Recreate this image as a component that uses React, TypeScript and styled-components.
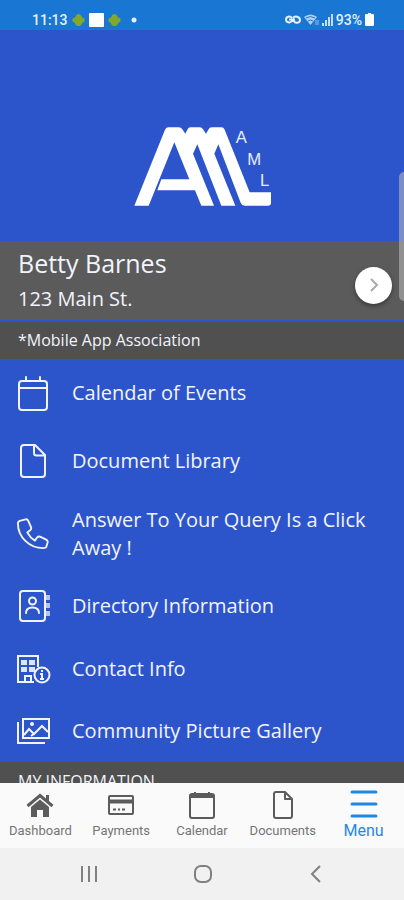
import React from "react";
import styled, { createGlobalStyle } from "styled-components";

const Global = createGlobalStyle`
  *, *::before, *::after { box-sizing: border-box; }
  body { margin: 0; background: #2d55cb; }
  button { border: 0; margin: 0; padding: 0; background: none; font: inherit; color: inherit; cursor: pointer; }
  a { color: inherit; text-decoration: none; }
  h1, h2, p, ul { margin: 0; padding: 0; font-weight: 400; }
  svg { display: block; flex: none; }
`;

const Screen = styled.div`
  position: relative;
  display: flex;
  flex-direction: column;
  height: 100vh;
  background: #2d55cb;
  color: #f2f4fc;
  font-family: "Open Sans", "Noto Sans", sans-serif;
`;

const StatusBar = styled.header`
  flex: none;
  display: flex;
  justify-content: space-between;
  align-items: center;
  height: 30px;
  padding: 9px 30px 0 32px;
  background: #1976d2;
  color: #e4f0fc;
  font: 500 14px/20px Roboto, sans-serif;
`;

const StatusGroup = styled.div<{ $gap: number }>`
  display: flex;
  align-items: center;
  gap: ${(p) => p.$gap}px;
`;

const Content = styled.main`
  flex: 1;
  min-height: 0;
  overflow: hidden;
`;

const LogoArea = styled.div`
  display: flex;
  justify-content: center;
  padding: 85px 0 21px 6px;
`;

const Profile = styled.section`
  display: flex;
  justify-content: space-between;
  align-items: center;
  padding: 3px 12px 4px 18px;
  background: #5b5b5b;
`;

const Name = styled.h1`
  font-size: 25px;
  line-height: 38px;
`;

const Address = styled.p`
  font-size: 20px;
  line-height: 34px;
`;

const RoundButton = styled.button`
  display: grid;
  place-items: center;
  width: 37px;
  height: 37px;
  margin-top: 10px;
  border-radius: 50%;
  background: #fff;
  box-shadow: 0 2px 4px rgba(0, 0, 0, 0.4);
`;

const Association = styled.h2`
  height: 37px;
  margin-top: 2px;
  padding-left: 18px;
  background: #505050;
  font-size: 16px;
  line-height: 37px;
`;

const MenuList = styled.ul`
  list-style: none;
`;

const MenuLink = styled.a<{ $height: number }>`
  display: grid;
  grid-template-columns: 32px 1fr;
  align-items: center;
  gap: 23px;
  min-height: ${(p) => p.$height}px;
  padding: 0 24px 0 17px;
  font-size: 20px;
  line-height: 28px;
`;

const SectionTitle = styled.h2`
  padding-left: 18px;
  background: #505050;
  font-size: 16px;
  line-height: 38px;
`;

const TabBar = styled.nav`
  flex: none;
  display: grid;
  grid-template-columns: repeat(5, 1fr);
  height: 65px;
  background: #fafafa;
`;

const Tab = styled.a<{ $active?: boolean }>`
  display: flex;
  flex-direction: column;
  align-items: center;
  padding-top: 6px;
  color: ${(p) => (p.$active ? "#1e88e5" : "#757575")};
  font-family: Roboto, sans-serif;
  font-size: ${(p) => (p.$active ? 16 : 13)}px;
  line-height: 20px;
`;

const TabIcon = styled.span`
  display: grid;
  place-items: center;
  height: 32px;
  color: #5c5c5c;
`;

const SystemBar = styled.nav`
  flex: none;
  display: flex;
  justify-content: space-between;
  align-items: center;
  height: 52px;
  padding: 0 78px;
  background: #f1f1f1;
  color: #808080;
`;

const EdgeHandle = styled.div`
  position: absolute;
  top: 172px;
  right: 0;
  width: 5px;
  height: 129px;
  border-radius: 5px 0 0 5px;
  background: rgba(190, 190, 190, 0.55);
`;

const Android = () => (
  <svg width="13" height="14" viewBox="0 0 13 14" fill="#82a829" aria-hidden="true">
    <path d="M3 4.500C3.500 2.500 5 1 6.500 1S9.500 2.500 10 4.500L12.500 5.500V8.500L10 10V11L8 13H5L3 11V10L.5 8.500V5.500Z" />
  </svg>
);

const Logo = () => (
  <svg width="170" height="105" viewBox="0 0 510 315" role="img" aria-label="AML">
    <path
      fill="#fff"
      d="M43 272 135 44Q138 37 146 37H176Q183 37 187 43L196 56 202 44Q205 37 212 37H239Q246 37 249 43L258 56 265 44Q268 37 276 37H304Q311 37 314 44L389 232H453V263Q453 272 444 272H374Q366 272 362 263L295 88 283 116 346 272H304L232 88 219 116 282 272H244L225 226H112L124 193H208L163 82 86 272Z"
    />
    <g fill="#e9edfb" fontFamily="Liberation Sans, Arial, sans-serif" fontSize="50">
      <text x="347" y="84">A</text>
      <text x="382" y="149">M</text>
      <text x="420" y="214">L</text>
    </g>
  </svg>
);

const line = { fill: "none", stroke: "currentColor", strokeWidth: 2, strokeLinecap: "round", strokeLinejoin: "round" } as const;

const icons = {
  calendar: (
    <svg width="32" height="36" viewBox="0 0 32 36" {...line} aria-hidden="true">
      <rect x="2" y="6" width="28" height="29" rx="3" />
      <path d="M2 13H30M9 2V6M23 2V6" />
    </svg>
  ),
  document: (
    <svg width="32" height="36" viewBox="0 0 32 36" {...line} aria-hidden="true">
      <path d="M7 2H18L28 12V31Q28 34 25 34H7Q4 34 4 31V5Q4 2 7 2ZM17 2V10Q17 12.500 19.500 12.500H28" />
    </svg>
  ),
  phone: (
    <svg width="32" height="32" viewBox="0 0 34 34" {...line} aria-hidden="true">
      <path d="M3 3 9 1.500Q11 1 12 3L15 10Q15.500 12 14 13L11 15.500Q14 21 19 24L21.500 20.500Q23 19 25 20L31 23Q33 24 32.500 26L31 31Q30.500 32 28 32C13 32 1 20 1 6Q1 3.500 3 3Z" />
    </svg>
  ),
  directory: (
    <svg width="34" height="34" viewBox="0 0 34 34" {...line} aria-hidden="true">
      <rect x="3" y="2" width="25" height="30" rx="3" />
      <circle cx="15.500" cy="12" r="3.500" />
      <path d="M9 24C9 20 11.500 18.500 15.500 18.500S22 20 22 24" />
      <path d="M31 6V11M31 14V19M31 22V27" strokeWidth="4" strokeLinecap="butt" opacity=".7" />
    </svg>
  ),
  contact: (
    <svg width="34" height="30" viewBox="0 0 34 30" {...line} strokeLinecap="butt" strokeLinejoin="miter" aria-hidden="true">
      <path d="M17 28H1V2H21V13M8 28V22H14V28" />
      <path d="M4 8.500H10M12 8.500H18M4 15.500H10M12 15.500H18" strokeWidth="5" opacity=".9" />
      <circle cx="25" cy="21" r="7.500" />
      <path d="M25 16V18M23 20H25V25M23 25H27" />
    </svg>
  ),
  gallery: (
    <svg width="34" height="28" viewBox="0 0 34 28" {...line} strokeLinecap="butt" strokeLinejoin="miter" aria-hidden="true">
      <path d="M1 5V26H28" />
      <rect x="6" y="2" width="26" height="19" />
      <path d="M7 18 12 12 17 17 25 9 31 15M14 19 18 16" />
      <circle cx="15" cy="7" r="1" />
    </svg>
  ),
};

const menu: { label: string; icon: keyof typeof icons; height: number }[] = [
  { label: "Calendar of Events", icon: "calendar", height: 68 },
  { label: "Document Library", icon: "document", height: 68 },
  { label: "Answer To Your Query Is a Click Away !", icon: "phone", height: 78 },
  { label: "Directory Information", icon: "directory", height: 65 },
  { label: "Contact Info", icon: "contact", height: 62 },
  { label: "Community Picture Gallery", icon: "gallery", height: 62 },
];

const tabs = [
  {
    label: "Dashboard",
    icon: (
      <svg width="28" height="26" viewBox="0 0 28 26" aria-hidden="true">
        <path d="M1.500 14 14 3.500 26.500 14M21.500 3V9" fill="none" stroke="currentColor" strokeWidth="3" />
        <path d="M5 15 14 7.500 23 15V25H17V18H11V25H5Z" fill="currentColor" />
      </svg>
    ),
  },
  {
    label: "Payments",
    icon: (
      <svg width="26" height="22" viewBox="0 0 26 22" {...line} strokeLinecap="butt" aria-hidden="true">
        <rect x="1" y="2" width="24" height="18" rx="1" />
        <path d="M1 7.500H25" strokeWidth="4" />
        <path d="M5 15.500H8M10 15.500H12M14 15.500H17" />
      </svg>
    ),
  },
  {
    label: "Calendar",
    icon: (
      <svg width="26" height="28" viewBox="0 0 26 28" {...line} strokeLinecap="butt" aria-hidden="true">
        <rect x="1" y="3" width="24" height="24" rx="2" />
        <path d="M1 5H25" strokeWidth="4" />
        <path d="M6 1V4M20 1V4" />
      </svg>
    ),
  },
  {
    label: "Documents",
    icon: (
      <svg width="20" height="28" viewBox="0 0 20 28" {...line} aria-hidden="true">
        <path d="M3 1H12L19 8V25Q19 27 17 27H3Q1 27 1 25V3Q1 1 3 1ZM12 1V8H19" />
      </svg>
    ),
  },
  {
    label: "Menu",
    active: true,
    icon: (
      <svg width="28" height="30" viewBox="0 0 28 30" fill="none" stroke="#1e88e5" strokeWidth="3" strokeLinecap="round" aria-hidden="true">
        <path d="M2 2H26M2 14H26M2 26H26" />
      </svg>
    ),
  },
];

export default function App() {
  return (
    <>
      <Global />
      <Screen>
        <StatusBar>
          <StatusGroup $gap={4}>
            <span>11:13</span>
            <Android />
            <svg width="15" height="14" aria-hidden="true"><rect width="15" height="14" rx="1" fill="#fff" /></svg>
            <Android />
            <svg width="16" height="6" aria-hidden="true"><circle cx="9" cy="3" r="2.500" fill="#e4f0fc" /></svg>
          </StatusGroup>
          <StatusGroup $gap={3}>
            <svg width="16" height="12" viewBox="0 0 16 12" fill="none" stroke="currentColor" strokeWidth="2" aria-hidden="true">
              <path d="M7 4C5 1.500 1 2.500 1 5.500S5 9.500 7 7H9C10 10 15 9 15 6S10 1 8 4M4 5.500H10" />
            </svg>
            <svg width="15" height="12" viewBox="0 0 15 12" aria-hidden="true">
              <path d="M0 3Q6.500-2 13 3L6.500 11Z" fill="currentColor" opacity=".75" />
              <path d="M2 4Q6.500 1 11 4M4 7Q6.500 5 9 7" stroke="#1976d2" fill="none" />
              <path d="M12 6V11M14 6V11" stroke="currentColor" opacity=".6" />
            </svg>
            <svg width="11" height="12" viewBox="0 0 11 12" stroke="currentColor" strokeWidth="2" aria-hidden="true">
              <path d="M1 9V12M4 6V12M7 3V12M10 0V12" opacity=".85" />
            </svg>
            <span>93%</span>
            <svg width="9" height="13" viewBox="0 0 9 13" fill="#fff" aria-hidden="true">
              <path d="M3 0H6V1H8Q9 1 9 2V12Q9 13 8 13H1Q0 13 0 12V2Q0 1 1 1H3Z" />
            </svg>
          </StatusGroup>
        </StatusBar>

        <Content>
          <LogoArea>
            <Logo />
          </LogoArea>
          <Profile>
            <div>
              <Name>Betty Barnes</Name>
              <Address>123 Main St.</Address>
            </div>
            <RoundButton type="button" aria-label="Open profile">
              <svg width="12" height="16" viewBox="0 0 12 16" fill="none" stroke="#a9a9a9" strokeWidth="2" aria-hidden="true">
                <path d="M3 2 9 8 3 14" />
              </svg>
            </RoundButton>
          </Profile>
          <Association>*Mobile App Association</Association>
          <MenuList>
            {menu.map((m) => (
              <li key={m.label}>
                <MenuLink href="#" $height={m.height}>
                  {icons[m.icon]}
                  <span>{m.label}</span>
                </MenuLink>
              </li>
            ))}
          </MenuList>
          <SectionTitle>MY INFORMATION</SectionTitle>
        </Content>

        <TabBar aria-label="Main">
          {tabs.map((t) => (
            <Tab key={t.label} href="#" $active={t.active}>
              <TabIcon>{t.icon}</TabIcon>
              {t.label}
            </Tab>
          ))}
        </TabBar>

        <SystemBar aria-label="System">
          <button type="button" aria-label="Recent apps">
            <svg width="22" height="20" viewBox="0 0 22 20" stroke="currentColor" strokeWidth="2" aria-hidden="true">
              <path d="M4 2V18M11 2V18M18 2V18" />
            </svg>
          </button>
          <button type="button" aria-label="Home">
            <svg width="20" height="20" viewBox="0 0 20 20" fill="none" stroke="currentColor" strokeWidth="2" aria-hidden="true">
              <rect x="2" y="2" width="16" height="16" rx="6" />
            </svg>
          </button>
          <button type="button" aria-label="Back">
            <svg width="20" height="20" viewBox="0 0 20 20" fill="none" stroke="currentColor" strokeWidth="2" aria-hidden="true">
              <path d="M14 2 6 10 14 18" />
            </svg>
          </button>
        </SystemBar>
        <EdgeHandle />
      </Screen>
    </>
  );
}
